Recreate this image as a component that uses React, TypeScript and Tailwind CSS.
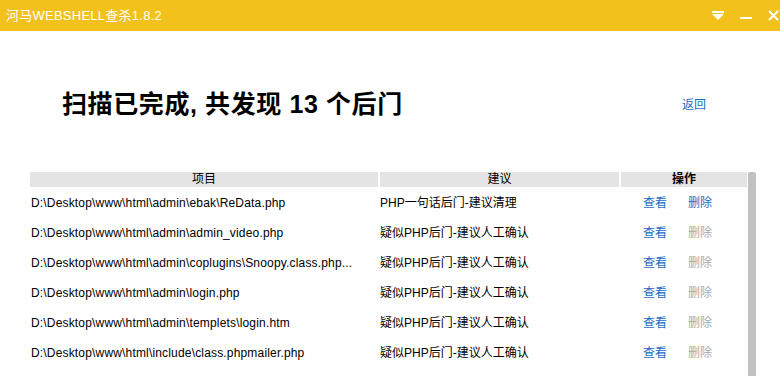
const rows = [
  { path: "D:\\Desktop\\www\\html\\admin\\ebak\\ReData.php", advice: "PHP一句话后门-建议清理", canDelete: true },
  { path: "D:\\Desktop\\www\\html\\admin\\admin_video.php", advice: "疑似PHP后门-建议人工确认", canDelete: false },
  { path: "D:\\Desktop\\www\\html\\admin\\coplugins\\Snoopy.class.php...", advice: "疑似PHP后门-建议人工确认", canDelete: false },
  { path: "D:\\Desktop\\www\\html\\admin\\login.php", advice: "疑似PHP后门-建议人工确认", canDelete: false },
  { path: "D:\\Desktop\\www\\html\\admin\\templets\\login.htm", advice: "疑似PHP后门-建议人工确认", canDelete: false },
  { path: "D:\\Desktop\\www\\html\\include\\class.phpmailer.php", advice: "疑似PHP后门-建议人工确认", canDelete: false },
];

function TitleBar() {
  return (
    <div className="flex h-[31px] items-center justify-between bg-[#f2c11c] pl-[6px] pr-[1px]">
      <span className="text-[13px] leading-none tracking-[0.25px] text-white">河马WEBSHELL查杀1.8.2</span>
      <div className="flex items-center">
        <svg width="12" height="10" viewBox="0 0 12 10" className="mt-[1px]">
          <rect x="0" y="0" width="12" height="2" fill="#fff" />
          <polygon points="0,3 12,3 6,9" fill="#fff" />
        </svg>
        <svg width="12" height="2" viewBox="0 0 12 2" className="ml-[16px] mt-[5px]">
          <rect x="0" y="0" width="12" height="2" fill="#fff" />
        </svg>
        <svg width="11" height="11" viewBox="0 0 11 11" className="ml-[16px]">
          <path d="M1 1 L10 10 M10 1 L1 10" stroke="#fff" strokeWidth="2" />
        </svg>
      </div>
    </div>
  );
}

export default function App() {
  return (
    <div className="h-[376px] w-[780px] overflow-hidden bg-white font-['Liberation_Sans','Noto_Sans_CJK_SC',sans-serif] text-[12px] text-black">
      <TitleBar />

      <div className="mt-[59px] flex h-[28px] items-center">
        <h1 className="ml-[62px] text-[25px] font-bold leading-none tracking-[0.6px]">
          扫描已完成, 共发现 13 个后门
        </h1>
        <a className="ml-auto mr-[74px] mt-[2px] text-[12px] text-[#1a6bc6]">返回</a>
      </div>

      <div className="mt-[54px] flex pl-[30px]">
        <div className="w-[717px]">
          <div className="grid h-[15px] grid-cols-[348px_239px_126px] gap-x-[2px] text-center leading-[15px]">
            <div className="bg-[#e4e4e4]">项目</div>
            <div className="bg-[#e4e4e4]">建议</div>
            <div className="bg-[#e4e4e4] font-bold">操作</div>
          </div>
          <div className="pt-[1px]">
            {rows.map((row) => (
              <div key={row.path} className="grid h-[30px] grid-cols-[350px_263px_104px] items-center">
                <span className="pl-[1px] tracking-[0.17px]">{row.path}</span>
                <span>{row.advice}</span>
                <span className="flex gap-[21px]">
                  <a className="text-[#1a6bc6]">查看</a>
                  <a className={row.canDelete ? "text-[#1a6bc6]" : "text-[#a9a9a9]"}>删除</a>
                </span>
              </div>
            ))}
          </div>
        </div>
        <div className="ml-[1px] h-[210px] w-[8px] rounded-t-[2px] bg-[#c1c1c1]" />
      </div>
    </div>
  );
}
